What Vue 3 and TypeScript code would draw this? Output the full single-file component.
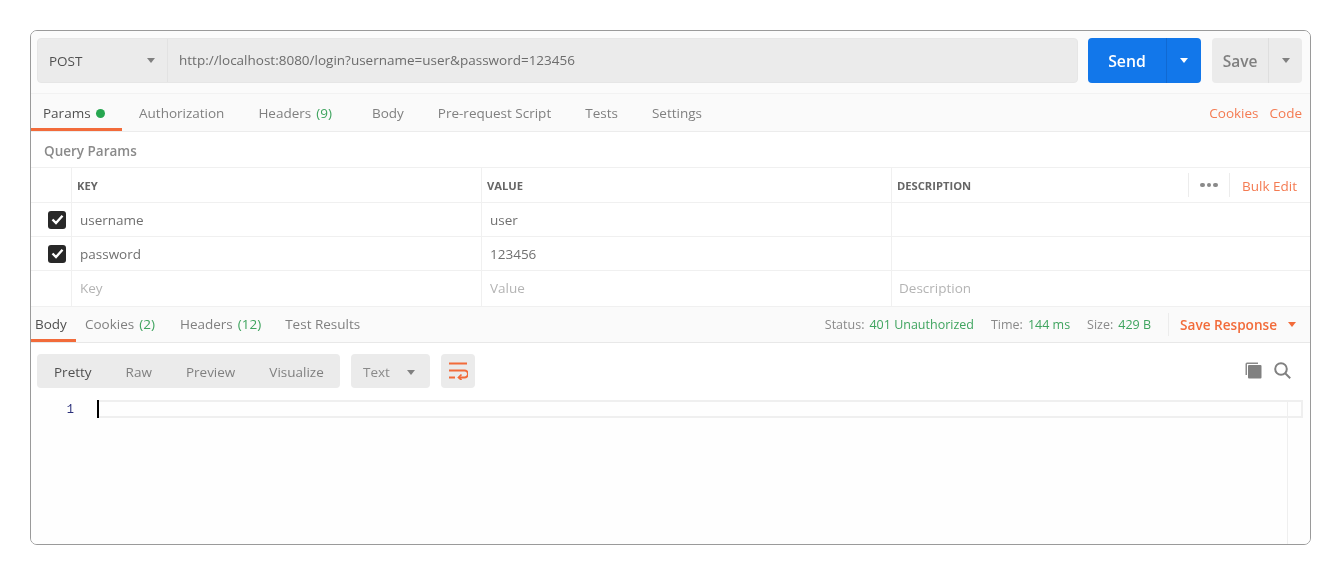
<script setup lang="ts">
interface Param { key: string; value: string }
const params: Param[] = [
  { key: 'username', value: 'user' },
  { key: 'password', value: '123456' },
]
const reqTabs = [
  { label: 'Authorization', cls: 't-auth' },
  { label: 'Headers', count: '(9)', cls: 't-head' },
  { label: 'Body', cls: 't-body' },
  { label: 'Pre-request Script', cls: 't-pre' },
  { label: 'Tests', cls: 't-tests' },
  { label: 'Settings', cls: 't-set' },
]
const views = ['Raw', 'Preview', 'Visualize']
</script>

<template>
  <div class="page">
    <div class="frame">
      <div class="topbar">
        <div class="urlgroup">
          <div class="method"><span>POST</span><i class="caret grey"></i></div>
          <div class="url">http://localhost:8080/login?username=user&amp;password=123456</div>
        </div>
        <div class="send">
          <span class="send-label">Send</span>
          <span class="send-drop"><i class="caret white"></i></span>
        </div>
        <div class="save">
          <span class="save-label">Save</span>
          <span class="save-drop"><i class="caret grey"></i></span>
        </div>
      </div>

      <div class="reqtabs">
        <div class="tab active params-tab">Params <b class="dot"></b></div>
        <div v-for="t in reqTabs" :key="t.label" class="tab" :class="t.cls">
          {{ t.label }}<span v-if="t.count" class="count">{{ t.count }}</span>
        </div>
        <div class="tab-links"><span>Cookies</span><span>Code</span></div>
      </div>

      <div class="qp-title">Query Params</div>

      <div class="row head">
        <div class="c-check"></div>
        <div class="c-key">KEY</div>
        <div class="c-val">VALUE</div>
        <div class="c-desc">
          <span>DESCRIPTION</span>
          <div class="head-actions">
            <span class="more"><i></i><i></i><i></i></span>
            <span class="bulk">Bulk Edit</span>
          </div>
        </div>
      </div>
      <div v-for="p in params" :key="p.key" class="row body-row">
        <div class="c-check">
          <span class="check">
            <svg width="13" height="11" viewBox="0 0 13 11"><path d="M1.500 5.500 5 9 11.500 1.800" fill="none" stroke="#fff" stroke-width="2.400" /></svg>
          </span>
        </div>
        <div class="c-key">{{ p.key }}</div>
        <div class="c-val">{{ p.value }}</div>
        <div class="c-desc"></div>
      </div>
      <div class="row body-row ph">
        <div class="c-check"></div>
        <div class="c-key">Key</div>
        <div class="c-val">Value</div>
        <div class="c-desc">Description</div>
      </div>

      <div class="restabs">
        <div class="rtab active">Body</div>
        <div class="rtab">Cookies<span class="count">(2)</span></div>
        <div class="rtab">Headers<span class="count">(12)</span></div>
        <div class="rtab">Test Results</div>
        <div class="meta">
          <span class="m-l">Status:</span><span class="m-v m-gap">401 Unauthorized</span>
          <span class="m-l">Time:</span><span class="m-v m-gap">144 ms</span>
          <span class="m-l">Size:</span><span class="m-v">429 B</span>
          <span class="save-resp">Save Response<i class="caret orange"></i></span>
        </div>
      </div>

      <div class="toolbar">
        <div class="views">
          <span class="view on">Pretty</span>
          <span v-for="v in views" :key="v" class="view">{{ v }}</span>
        </div>
        <div class="lang"><span>Text</span><i class="caret grey"></i></div>
        <div class="wrap">
          <svg width="20" height="18" viewBox="0 0 20 18" fill="none" stroke="#f26b3a" stroke-width="2">
            <path d="M1 1.500h18" />
            <path d="M1 8.500h15.500a2.800 2.800 0 0 1 0 7H11" />
            <path d="M13.500 12.500 10.500 15.500 13.500 18" stroke-width="1.700" />
            <path d="M1 15.500h6" />
          </svg>
        </div>
        <div class="tools">
          <svg width="17" height="17" viewBox="0 0 17 17">
            <path d="M0.500 2A1.500 1.500 0 0 1 2 0.500H13V2H2V13H0.500Z" fill="#8a8a8a" />
            <rect x="3" y="3" width="13.500" height="13.500" rx="1" fill="#808080" />
          </svg>
          <svg width="17" height="17" viewBox="0 0 17 17" fill="none" stroke="#808080" stroke-width="2">
            <circle cx="7" cy="7" r="5.800" />
            <path d="M11.200 11.200l5 5" />
          </svg>
        </div>
      </div>

      <div class="editor">
        <div class="gutter">1</div>
        <div class="code">
          <div class="active-line"></div>
          <span class="cursor"></span>
          <span class="ruler"></span>
        </div>
      </div>
    </div>
  </div>
</template>

<style scoped>
.page { width: 1341px; height: 575px; padding: 30px; box-sizing: border-box; background: #fff; font-family: "Open Sans", "Liberation Sans", sans-serif; font-size: 13.500px; color: #808080; filter: blur(0.3px); }
.frame { width: 1281px; height: 515px; box-sizing: border-box; border: 1px solid #9a9a9a; border-radius: 7px; display: flex; flex-direction: column; overflow: hidden; background: #fff; }
.caret { display: inline-block; width: 0; height: 0; border-left: 4.500px solid transparent; border-right: 4.500px solid transparent; border-top: 5px solid #808080; }
.caret.white { border-top-color: #fff; }
.caret.orange { border-top-color: #f26b3a; }

.topbar { height: 63px; box-sizing: border-box; padding: 7px 8px 10px 6px; display: flex; background: #fbfbfb; border-bottom: 1px solid #f2f2f2; }
.urlgroup { width: 1041px; display: flex; background: #ebebeb; border: 1px solid #e6e6e6; border-radius: 4px; box-sizing: border-box; }
.method { width: 130px; box-sizing: border-box; padding: 0 12px 0 11px; border-right: 1px solid #e2e2e2; display: flex; align-items: center; justify-content: space-between; color: #505050; }
.url { padding-left: 11px; display: flex; align-items: center; color: #6c6c6c; padding-bottom: 2px; }
.send { width: 113px; margin-left: 10px; background: #1277ea; border-radius: 4px; color: #fff; display: flex; }
.send-label { width: 78px; display: flex; align-items: center; justify-content: center; font-size: 15.800px; font-weight: 600; border-right: 1px solid #1069d2; }
.send-drop { flex: 1; display: flex; align-items: center; justify-content: center; }
.save { width: 90px; margin-left: 11px; background: #ebebeb; border-radius: 4px; display: flex; color: #7f7f7f; }
.save-label { width: 56px; display: flex; align-items: center; justify-content: center; font-size: 15.500px; font-weight: 600; border-right: 1px solid #dedede; }
.save-drop { flex: 1; display: flex; align-items: center; justify-content: center; }

.reqtabs { height: 38px; box-sizing: border-box; display: flex; background: #fafafa; border-bottom: 1px solid #ececec; position: relative; }
.tab { line-height: 39px; color: #808080; white-space: nowrap; }
.count { color: #3fa45f; margin-left: 5px; }
.params-tab { width: 91px; box-sizing: border-box; padding-left: 12px; color: #505050; border-bottom: 3px solid #f26b3a; height: 37px; }
.dot { display: inline-block; width: 9px; height: 9px; border-radius: 50%; background: #26a650; margin-left: 2px; vertical-align: 0; }
.t-auth { margin-left: 17px; }
.t-head { margin-left: 34px; }
.t-body { margin-left: 40px; }
.t-pre { margin-left: 34px; }
.t-tests { margin-left: 34px; }
.t-set { margin-left: 34px; }
.tab-links { margin-left: auto; padding-right: 8px; display: flex; gap: 11px; line-height: 39px; color: #f47b52; }

.qp-title { height: 36px; box-sizing: border-box; line-height: 38px; padding-left: 13px; font-weight: 600; font-size: 13.500px; color: #8a8a8a; border-bottom: 1px solid #f0f0f0; }

.row { display: flex; box-sizing: border-box; border-bottom: 1px solid #f0f0f0; }
.row > div { display: flex; align-items: center; box-sizing: border-box; }
.c-check { width: 41px; border-right: 1px solid #f0f0f0; justify-content: center; padding-left: 12px; }
.c-key { width: 410px; border-right: 1px solid #f0f0f0; padding-left: 8px; }
.c-val { width: 410px; border-right: 1px solid #f0f0f0; padding-left: 8px; }
.c-desc { flex: 1; padding-left: 7px; }
.head { height: 35px; font-size: 11.200px; font-weight: 700; color: #666; }
.head .c-key, .head .c-val, .head .c-desc { padding-left: 5px; }
.head-actions { margin-left: auto; display: flex; align-items: center; height: 100%; }
.more { width: 42px; height: 24px; box-sizing: border-box; border-left: 1px solid #ececec; border-right: 1px solid #ececec; display: flex; align-items: center; justify-content: center; gap: 2px; }
.more i { width: 4.500px; height: 4.500px; background: #8a8a8a; border-radius: 50%; }
.bulk { width: 80px; box-sizing: border-box; padding: 2px 0 0 12px; font-size: 13.500px; font-weight: 400; color: #f47b52; }
.body-row { height: 34px; color: #707070; }
.body-row.ph { height: 35px; color: #b4b4b4; border-bottom: 0; }
.body-row.ph > div { padding-bottom: 2px; }
.check { width: 18px; height: 18px; background: #282828; border-radius: 3px; display: flex; align-items: center; justify-content: center; }

.restabs { height: 37px; box-sizing: border-box; display: flex; background: #fafafa; border-top: 1px solid #f0f0f0; border-bottom: 1px solid #e8e8e8; position: relative; }
.rtab { line-height: 35px; margin-left: 24px; white-space: nowrap; }
.rtab.active { margin-left: 0; width: 45px; height: 35px; box-sizing: border-box; padding-left: 4px; color: #505050; border-bottom: 3px solid #f26b3a; margin-right: -4px; }
.rtab:nth-child(2) { margin-left: 13px; }
.rtab:nth-child(3) { margin-left: 25px; }
.meta { margin-left: auto; display: flex; align-items: center; font-size: 12.500px; padding-right: 14px; height: 35px; }
.m-l { color: #8a8a8a; margin-right: 5px; }
.m-v { color: #3fa45f; }
.m-gap { margin-right: 17px; }
.save-resp { margin-left: 17px; height: 23px; padding-left: 11px; border-left: 1px solid #ececec; display: flex; align-items: center; color: #f26b3a; font-weight: 600; font-size: 13.600px; gap: 11px; }

.toolbar { height: 57px; box-sizing: border-box; padding: 11px 8px 12px 6px; display: flex; position: relative; }
.views { width: 303px; background: #ebebeb; border-radius: 4px; display: flex; align-items: center; height: 34px; box-sizing: border-box; padding-top: 2px; }
.view { margin-left: 34px; }
.view.on { margin-left: 17px; color: #505050; }
.lang { width: 79px; height: 34px; margin-left: 11px; padding: 2px 15px 0 12px; box-sizing: border-box; background: #ebebeb; border-radius: 4px; display: flex; align-items: center; justify-content: space-between; color: #8a8a8a; }
.wrap { width: 34px; height: 34px; margin-left: 11px; background: #ebebeb; border-radius: 4px; display: flex; align-items: center; justify-content: center; }
.tools { margin-left: auto; display: flex; gap: 12px; height: 34px; align-items: center; padding-right: 11px; margin-top: -1px; }

.editor { flex: 1; display: flex; background: #fefefe; position: relative; }
.gutter { width: 66px; box-sizing: border-box; padding-right: 23px; padding-top: 1px; text-align: right; line-height: 18px; font-family: "Liberation Mono", monospace; font-size: 12px; color: #2a2f7a; }
.code { flex: 1; position: relative; }
.active-line { margin-right: 7px; height: 18px; box-sizing: border-box; border: 2px solid #efefef; }
.cursor { position: absolute; left: 0; top: 0; width: 2px; height: 18px; background: #000; }
.ruler { position: absolute; right: 22px; top: 0; bottom: 0; width: 1px; background: #efefef; }
</style>

<style>
html, body { margin: 0; background: #fff; }
</style>
